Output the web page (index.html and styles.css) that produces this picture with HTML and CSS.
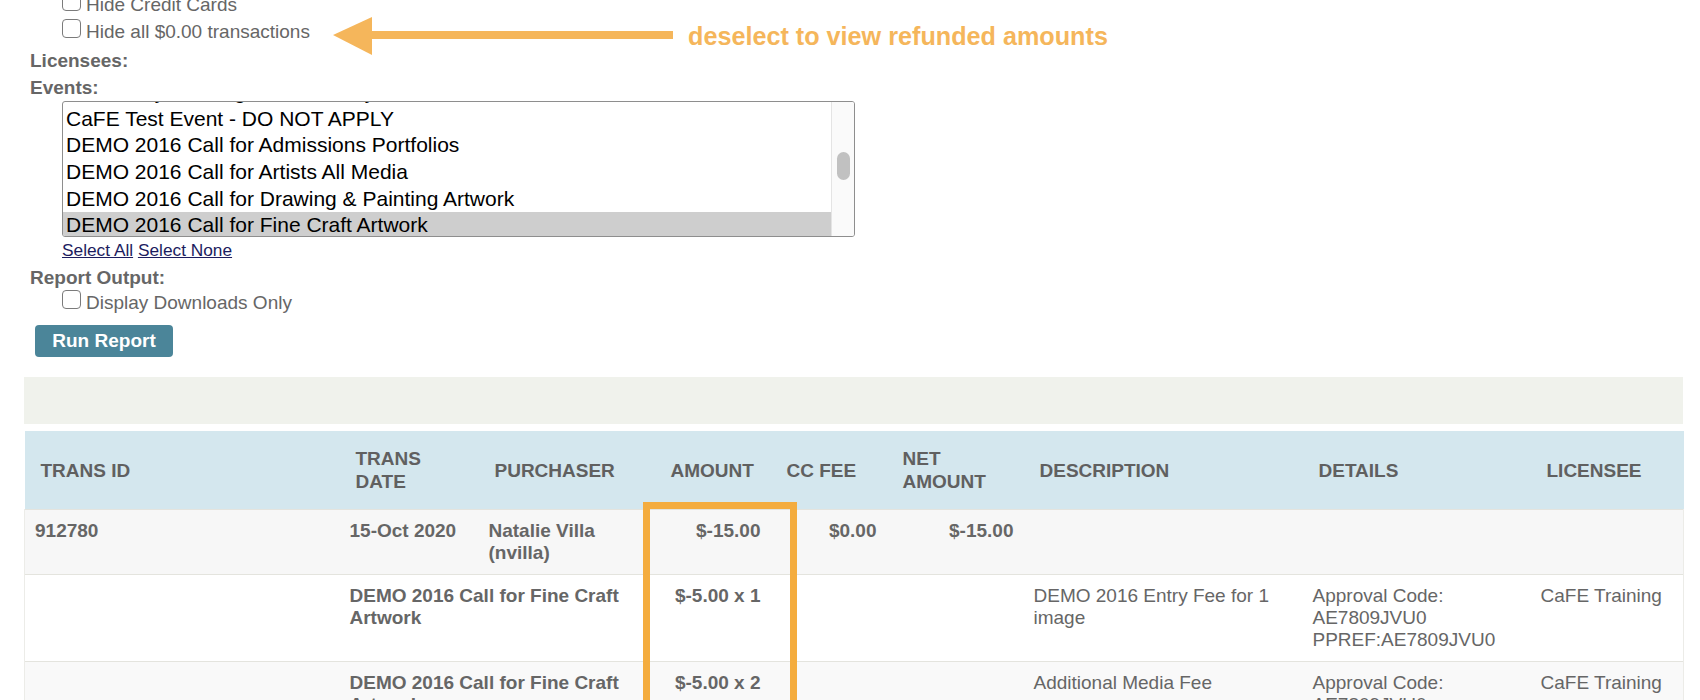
FILE: index.html
```html
<!DOCTYPE html>
<html lang="en">
<head>
<meta charset="utf-8">
<title>Transaction Report</title>
<link rel="stylesheet" href="styles.css">
</head>
<body>
<div class="page">
  <div class="filters">
    <label class="check-row"><input type="checkbox"><span>Hide Credit Cards</span></label>
    <label class="check-row"><input type="checkbox"><span>Hide all $0.00 transactions</span></label>
    <div class="field-label">Licensees:</div>
    <div class="field-label events-label">Events:</div>
    <div class="listbox">
      <div class="listbox-items">
        <div class="listbox-inner">
          <div class="opt">CaFE Jury Training Session Only</div>
          <div class="opt">CaFE Test Event - DO NOT APPLY</div>
          <div class="opt">DEMO 2016 Call for Admissions Portfolios</div>
          <div class="opt">DEMO 2016 Call for Artists All Media</div>
          <div class="opt">DEMO 2016 Call for Drawing &amp; Painting Artwork</div>
          <div class="opt selected">DEMO 2016 Call for Fine Craft Artwork</div>
        </div>
      </div>
      <div class="listbox-scroll"><div class="thumb"></div></div>
    </div>
    <div class="select-links"><a href="#">Select All</a> <a href="#">Select None</a></div>
    <div class="field-label output-label">Report Output:</div>
    <label class="check-row"><input type="checkbox"><span>Display Downloads Only</span></label>
    <button class="run-btn" type="button">Run Report</button>
  </div>

  <div class="band"></div>

  <div class="report">
    <table>
      <colgroup>
        <col class="c1"><col class="c2"><col class="c3"><col class="c4"><col class="c5"><col class="c6"><col class="c7"><col class="c8"><col class="c9">
      </colgroup>
      <thead>
        <tr>
          <th>TRANS ID</th>
          <th>TRANS DATE</th>
          <th>PURCHASER</th>
          <th>AMOUNT</th>
          <th>CC FEE</th>
          <th>NET AMOUNT</th>
          <th>DESCRIPTION</th>
          <th>DETAILS</th>
          <th>LICENSEE</th>
        </tr>
      </thead>
      <tbody>
        <tr class="summary">
          <td class="b">912780</td>
          <td class="b">15-Oct 2020</td>
          <td class="b">Natalie Villa (nvilla)</td>
          <td class="b num">$-15.00</td>
          <td class="b num">$0.00</td>
          <td class="b num">$-15.00</td>
          <td></td>
          <td></td>
          <td></td>
        </tr>
        <tr class="item">
          <td></td>
          <td class="b" colspan="2">DEMO 2016 Call for Fine Craft Artwork</td>
          <td class="b num">$-5.00 x 1</td>
          <td></td>
          <td></td>
          <td>DEMO 2016 Entry Fee for 1 image</td>
          <td>Approval Code:<br>AE7809JVU0<br>PPREF:AE7809JVU0</td>
          <td>CaFE Training</td>
        </tr>
        <tr class="item alt">
          <td></td>
          <td class="b" colspan="2">DEMO 2016 Call for Fine Craft Artwork</td>
          <td class="b num">$-5.00 x 2</td>
          <td></td>
          <td></td>
          <td>Additional Media Fee</td>
          <td>Approval Code:<br>AE7809JVU0<br>PPREF:AE7809JVU0</td>
          <td>CaFE Training</td>
        </tr>
      </tbody>
    </table>
    <div class="highlight-box"></div>
  </div>

  <svg class="note-arrow" width="342" height="42" viewBox="0 0 342 42" aria-hidden="true">
    <polygon points="0,20 39,2 39,40" fill="#f5b65b"/>
    <rect x="38" y="16" width="302" height="8" fill="#f5b65b"/>
  </svg>
  <div class="note-text">deselect to view refunded amounts</div>
</div>
</body>
</html>
```

FILE: styles.css
```css
html, body {
  margin: 0;
  padding: 0;
  overflow: hidden;
  background: #ffffff;
}

body {
  font-family: "Liberation Sans", Arial, Helvetica, sans-serif;
  color: #666666;
}

.page {
  position: relative;
  display: flow-root;
  padding: 0 17px 0 24px;
}

.filters {
  margin-top: -9px;
}

.check-row {
  display: block;
  padding-left: 38px;
  font-size: 19px;
  line-height: 27px;
  color: #666666;
}

.check-row input {
  -webkit-appearance: none;
  appearance: none;
  box-sizing: border-box;
  width: 19px;
  height: 19px;
  margin: 0 5px 0 0;
  border: 1px solid #7b7b7b;
  border-radius: 4px;
  background: #ffffff;
  vertical-align: baseline;
}

.field-label {
  font-size: 19px;
  font-weight: bold;
  line-height: 22px;
  padding: 5px 0 0 6px;
  color: #666666;
}

.events-label {
  padding-bottom: 2px;
}

.output-label {
  padding-top: 7px;
}

.listbox {
  box-sizing: border-box;
  display: flex;
  margin-left: 38px;
  width: 793px;
  height: 136px;
  border: 1px solid #8e8e8e;
  border-radius: 3px;
  overflow: hidden;
  background: #ffffff;
}

.listbox-items {
  flex: 1;
  overflow: hidden;
}

.listbox-inner {
  margin-top: -23px;
}

.opt {
  height: 26.67px;
  line-height: 26.67px;
  padding-left: 3px;
  font-size: 21px;
  color: #000000;
  white-space: nowrap;
}

.opt.selected {
  background: #cecece;
}

.listbox-scroll {
  width: 22px;
  border-left: 1px solid #e4e4e4;
  background: #fafafa;
}

.thumb {
  width: 13px;
  height: 28px;
  margin: 50px auto 0;
  border-radius: 7px;
  background: #c1c1c1;
}

.select-links {
  padding-left: 38px;
  margin-top: 3px;
  font-size: 17.3px;
  line-height: 20px;
}

.select-links a {
  color: #1c1c5e;
  text-decoration: underline;
}

.run-btn {
  display: block;
  margin: 9px 0 0 11px;
  width: 138px;
  height: 32px;
  padding: 0;
  border: none;
  border-radius: 4px;
  background: #4b8599;
  color: #ffffff;
  font-family: inherit;
  font-size: 19px;
  font-weight: bold;
}

.band {
  margin-top: 20px;
  height: 47px;
  background: #f0f2ec;
}

.report {
  position: relative;
  margin-top: 7px;
}

table {
  width: 100%;
  border-collapse: collapse;
  table-layout: fixed;
}

col.c1 { width: 315px; }
col.c2 { width: 139px; }
col.c3 { width: 176px; }
col.c4 { width: 116px; }
col.c5 { width: 116px; }
col.c6 { width: 137px; }
col.c7 { width: 279px; }
col.c8 { width: 228px; }
col.c9 { width: 153px; }

th {
  background: #d4e7ee;
  text-align: left;
  vertical-align: middle;
  padding: 16px;
  font-size: 19px;
  line-height: 23px;
  font-weight: bold;
  color: #606060;
}

td {
  padding: 10px;
  font-size: 19px;
  line-height: 22px;
  vertical-align: top;
  color: #666666;
  border-top: 1px solid #e4e4de;
}

td:first-child {
  border-left: 1px solid #ecece8;
}

td:last-child {
  border-right: 1px solid #ecece8;
}

td.b {
  font-weight: bold;
}

td.num {
  text-align: right;
}

tr.summary td {
  background: #f7f7f7;
}

tr.item td {
  background: #ffffff;
}

tr.item.alt td {
  background: #f9f9f9;
}

.highlight-box {
  position: absolute;
  left: 619px;
  top: 71px;
  width: 154px;
  height: 300px;
  box-sizing: border-box;
  border: 7px solid #f4ac3e;
  pointer-events: none;
}

.note-arrow {
  position: absolute;
  left: 333px;
  top: 15px;
}

.note-text {
  position: absolute;
  left: 688px;
  top: 21px;
  font-size: 25.2px;
  line-height: 30px;
  font-weight: bold;
  color: #f5b65b;
  white-space: nowrap;
}
```
